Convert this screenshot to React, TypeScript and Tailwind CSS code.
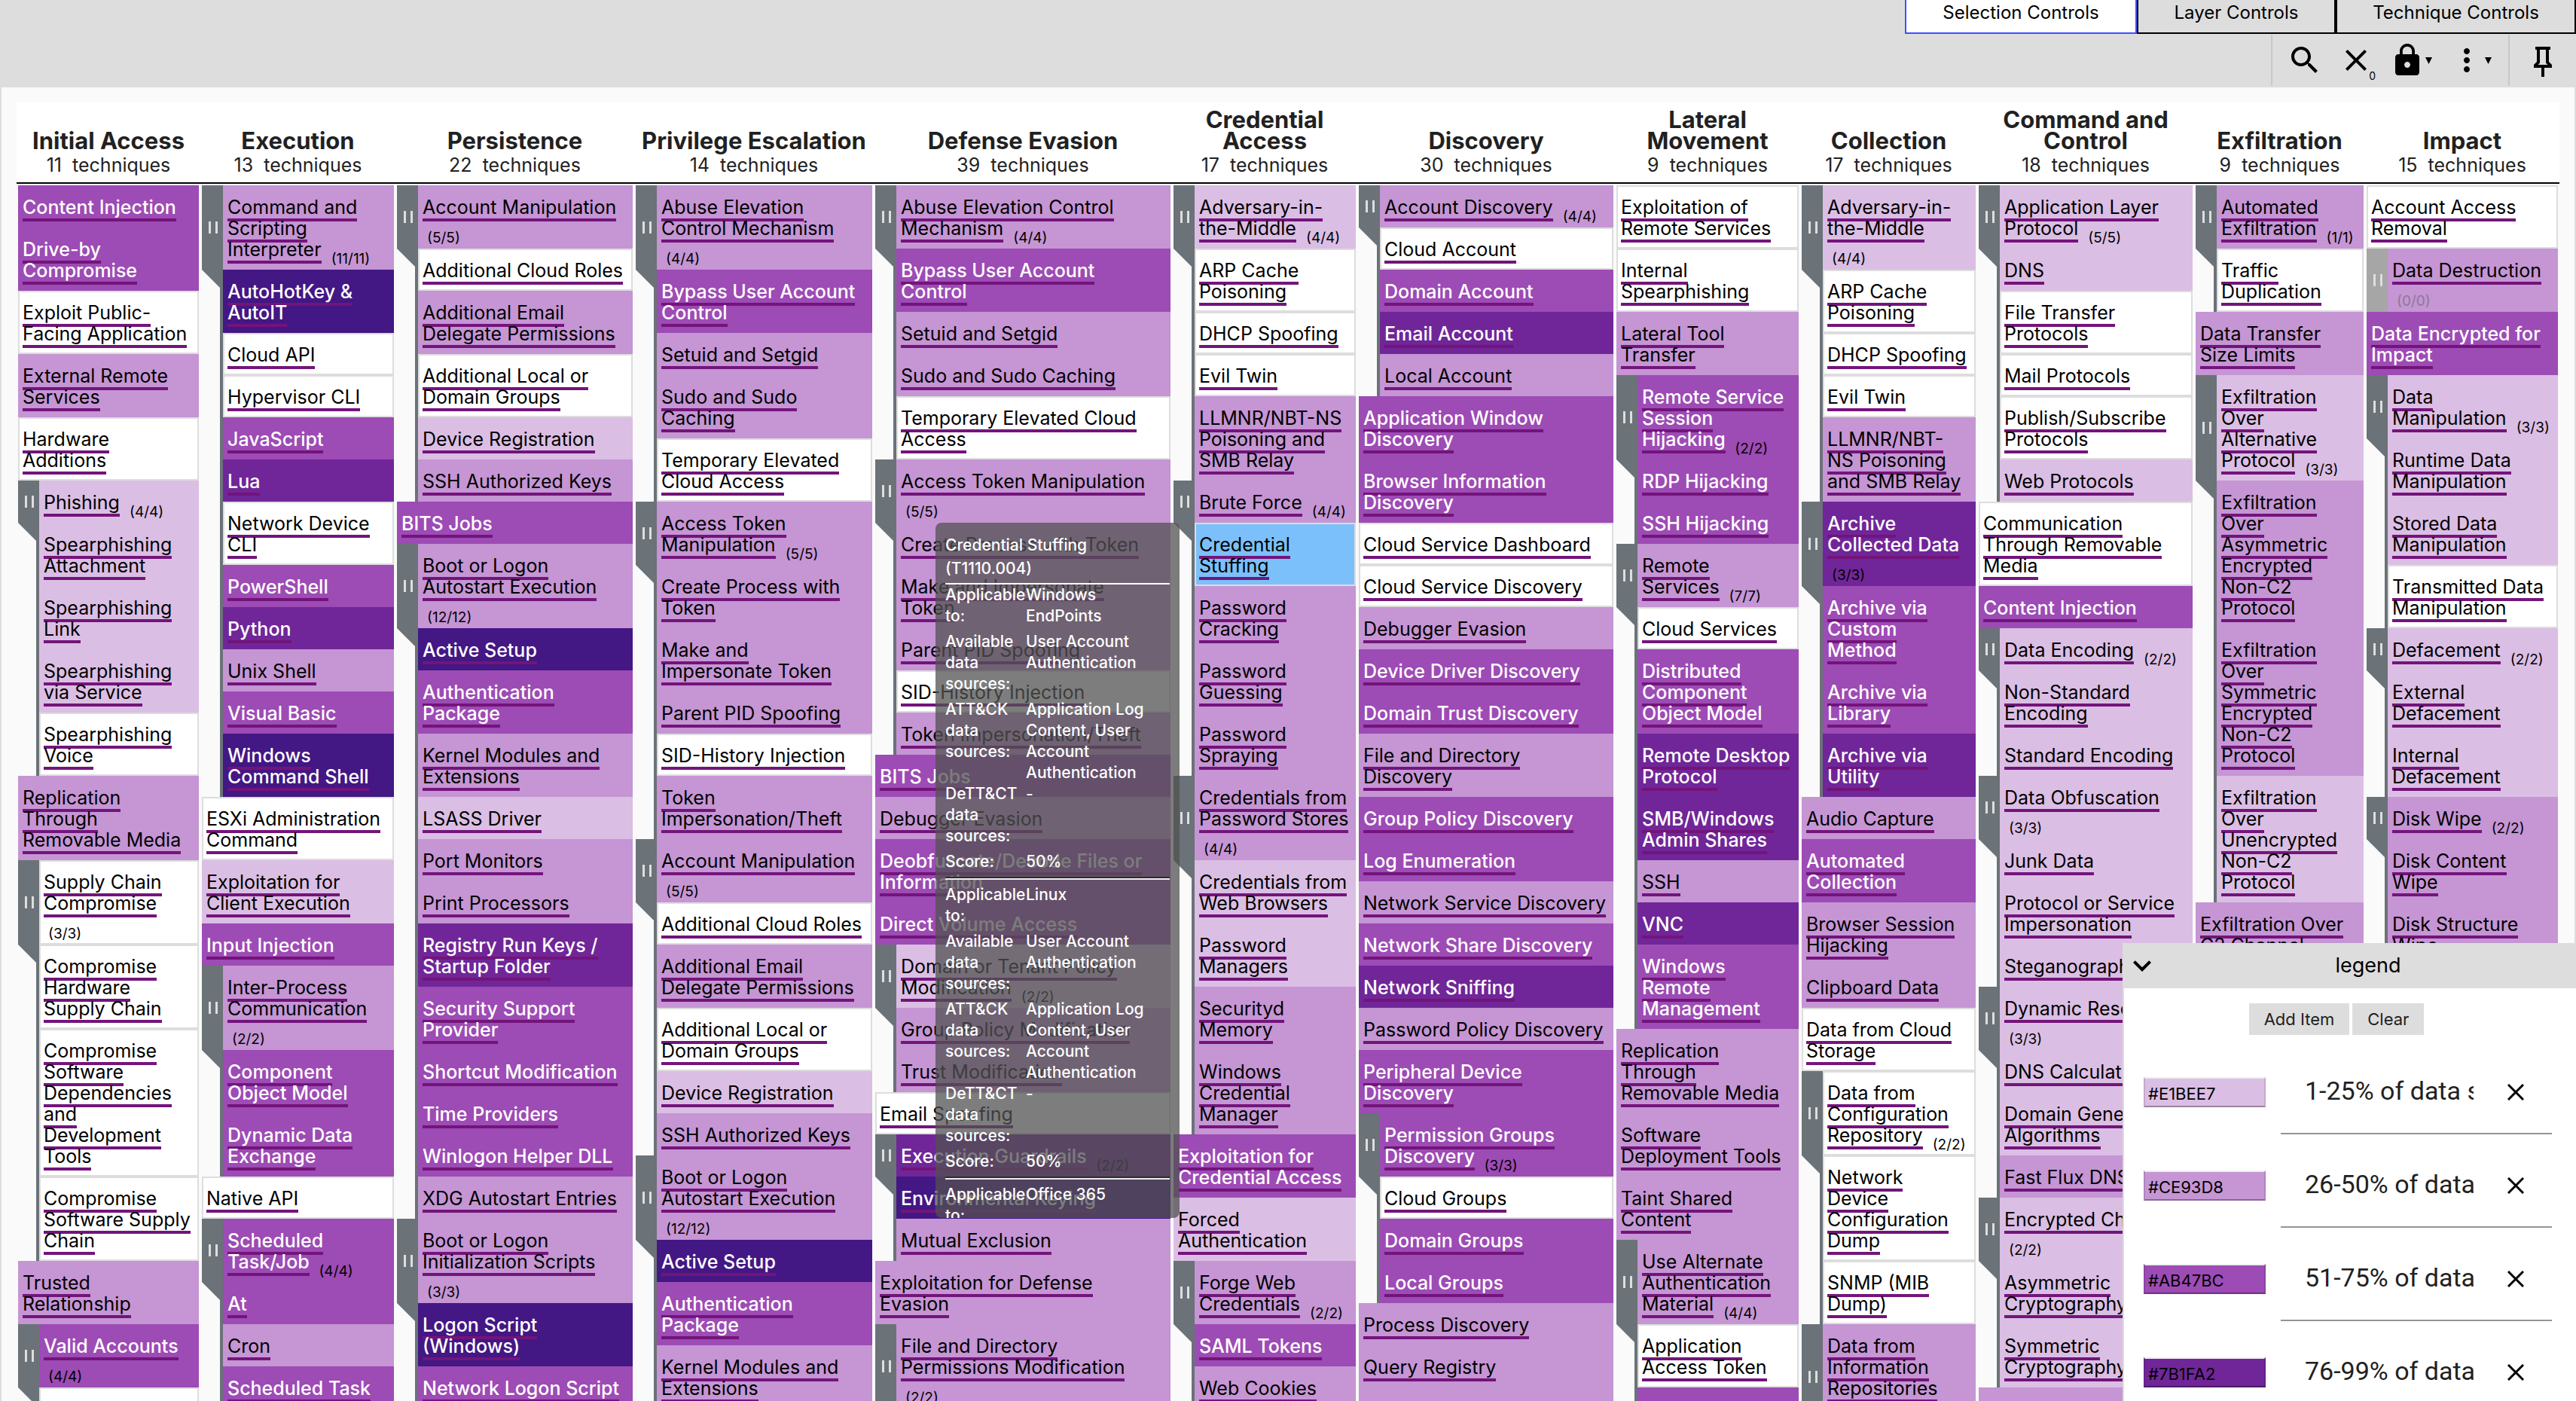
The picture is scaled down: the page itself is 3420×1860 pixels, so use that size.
import React from "react";

type Tone = "w" | "a" | "b" | "c" | "d" | "e" | "h";

interface Technique {
  name: string;
  tone: Tone;
  count?: string;
  /** The count sits on a line of its own below the name. */
  below?: boolean;
  subs?: Technique[];
}

interface Tactic {
  name: string;
  total: number;
  techniques: Technique[];
}

const TONES: Record<Tone, string> = {
  w: "border-2 border-[#dddddd] bg-white pl-1 pt-[13px] pb-[11px] text-black",
  h: "border-2 border-[#dddddd] bg-[#7bc0fa] pl-1 pt-[13px] pb-[11px] text-black",
  a: "bg-[#dbbee4] pl-1.5 pt-[15px] pb-[13px] text-black",
  b: "bg-[#c595d4] pl-1.5 pt-[15px] pb-[13px] text-black",
  c: "bg-[#9d4bb5] pl-1.5 pt-[15px] pb-[13px] font-medium text-white",
  d: "bg-[#702698] pl-1.5 pt-[15px] pb-[13px] font-medium text-white",
  e: "bg-[#431784] pl-1.5 pt-[15px] pb-[13px] font-medium text-white",
};

const t = (tone: Tone, name: string): Technique => ({ name, tone });
const p = (tone: Tone, name: string, count: string, subs: Technique[]): Technique => ({ name, tone, count, subs });
const q = (tone: Tone, name: string, count: string, subs: Technique[]): Technique => ({
  name,
  tone,
  count,
  subs,
  below: true,
});

const TACTICS: Tactic[] = [
  {
    name: "Initial Access",
    total: 11,
    techniques: [
      t("c", "Content Injection"),
      t("c", "Drive-by\nCompromise"),
      t("w", "Exploit Public-\nFacing Application"),
      t("b", "External Remote\nServices"),
      t("w", "Hardware\nAdditions"),
      p("a", "Phishing", "4/4", [
        t("a", "Spearphishing\nAttachment"),
        t("a", "Spearphishing\nLink"),
        t("a", "Spearphishing\nvia Service"),
        t("w", "Spearphishing\nVoice"),
      ]),
      t("b", "Replication\nThrough\nRemovable Media"),
      q("w", "Supply Chain\nCompromise", "3/3", [
        t("w", "Compromise\nHardware\nSupply Chain"),
        t("w", "Compromise\nSoftware\nDependencies\nand\nDevelopment\nTools"),
        t("w", "Compromise\nSoftware Supply\nChain"),
      ]),
      t("b", "Trusted\nRelationship"),
      q("c", "Valid Accounts", "4/4", [t("w", "Cloud Accounts")]),
    ],
  },
  {
    name: "Execution",
    total: 13,
    techniques: [
      p("b", "Command and\nScripting\nInterpreter", "11/11", [
        t("e", "AutoHotKey &\nAutoIT"),
        t("w", "Cloud API"),
        t("w", "Hypervisor CLI"),
        t("c", "JavaScript"),
        t("d", "Lua"),
        t("w", "Network Device\nCLI"),
        t("c", "PowerShell"),
        t("d", "Python"),
        t("b", "Unix Shell"),
        t("c", "Visual Basic"),
        t("e", "Windows\nCommand Shell"),
      ]),
      t("w", "ESXi Administration\nCommand"),
      t("a", "Exploitation for\nClient Execution"),
      t("c", "Input Injection"),
      q("b", "Inter-Process\nCommunication", "2/2", [
        t("c", "Component\nObject Model"),
        t("c", "Dynamic Data\nExchange"),
      ]),
      t("w", "Native API"),
      p("c", "Scheduled\nTask/Job", "4/4", [t("c", "At"), t("b", "Cron"), t("c", "Scheduled Task")]),
    ],
  },
  {
    name: "Persistence",
    total: 22,
    techniques: [
      q("b", "Account Manipulation", "5/5", [
        t("w", "Additional Cloud Roles"),
        t("b", "Additional Email\nDelegate Permissions"),
        t("w", "Additional Local or\nDomain Groups"),
        t("a", "Device Registration"),
        t("b", "SSH Authorized Keys"),
      ]),
      t("c", "BITS Jobs"),
      q("b", "Boot or Logon\nAutostart Execution", "12/12", [
        t("e", "Active Setup"),
        t("c", "Authentication\nPackage"),
        t("b", "Kernel Modules and\nExtensions"),
        t("a", "LSASS Driver"),
        t("b", "Port Monitors"),
        t("b", "Print Processors"),
        t("d", "Registry Run Keys /\nStartup Folder"),
        t("c", "Security Support\nProvider"),
        t("c", "Shortcut Modification"),
        t("c", "Time Providers"),
        t("c", "Winlogon Helper DLL"),
        t("b", "XDG Autostart Entries"),
      ]),
      q("b", "Boot or Logon\nInitialization Scripts", "3/3", [
        t("e", "Logon Script\n(Windows)"),
        t("c", "Network Logon Script"),
      ]),
    ],
  },
  {
    name: "Privilege Escalation",
    total: 14,
    techniques: [
      q("b", "Abuse Elevation\nControl Mechanism", "4/4", [
        t("c", "Bypass User Account\nControl"),
        t("b", "Setuid and Setgid"),
        t("b", "Sudo and Sudo\nCaching"),
        t("w", "Temporary Elevated\nCloud Access"),
      ]),
      p("b", "Access Token\nManipulation", "5/5", [
        t("b", "Create Process with\nToken"),
        t("b", "Make and\nImpersonate Token"),
        t("b", "Parent PID Spoofing"),
        t("w", "SID-History Injection"),
        t("b", "Token\nImpersonation/Theft"),
      ]),
      q("b", "Account Manipulation", "5/5", [
        t("w", "Additional Cloud Roles"),
        t("b", "Additional Email\nDelegate Permissions"),
        t("w", "Additional Local or\nDomain Groups"),
        t("a", "Device Registration"),
        t("b", "SSH Authorized Keys"),
      ]),
      q("b", "Boot or Logon\nAutostart Execution", "12/12", [
        t("e", "Active Setup"),
        t("c", "Authentication\nPackage"),
        t("b", "Kernel Modules and\nExtensions"),
      ]),
    ],
  },
  {
    name: "Defense Evasion",
    total: 39,
    techniques: [
      p("b", "Abuse Elevation Control\nMechanism", "4/4", [
        t("c", "Bypass User Account\nControl"),
        t("b", "Setuid and Setgid"),
        t("b", "Sudo and Sudo Caching"),
        t("w", "Temporary Elevated Cloud\nAccess"),
      ]),
      q("b", "Access Token Manipulation", "5/5", [
        t("b", "Create Process with Token"),
        t("b", "Make and Impersonate\nToken"),
        t("b", "Parent PID Spoofing"),
        t("w", "SID-History Injection"),
        t("b", "Token Impersonation/Theft"),
      ]),
      t("c", "BITS Jobs"),
      t("b", "Debugger Evasion"),
      t("c", "Deobfuscate/Decode Files or\nInformation"),
      t("c", "Direct Volume Access"),
      p("a", "Domain or Tenant Policy\nModification", "2/2", [
        t("b", "Group Policy Modification"),
        t("b", "Trust Modification"),
      ]),
      t("w", "Email Spoofing"),
      p("d", "Execution Guardrails", "2/2", [t("e", "Environmental Keying"), t("b", "Mutual Exclusion")]),
      t("b", "Exploitation for Defense\nEvasion"),
      q("b", "File and Directory\nPermissions Modification", "2/2", []),
    ],
  },
  {
    name: "Credential\nAccess",
    total: 17,
    techniques: [
      p("a", "Adversary-in-\nthe-Middle", "4/4", [
        t("w", "ARP Cache\nPoisoning"),
        t("w", "DHCP Spoofing"),
        t("w", "Evil Twin"),
        t("b", "LLMNR/NBT-NS\nPoisoning and\nSMB Relay"),
      ]),
      p("b", "Brute Force", "4/4", [
        t("h", "Credential\nStuffing"),
        t("b", "Password\nCracking"),
        t("b", "Password\nGuessing"),
        t("b", "Password\nSpraying"),
      ]),
      q("b", "Credentials from\nPassword Stores", "4/4", [
        t("a", "Credentials from\nWeb Browsers"),
        t("a", "Password\nManagers"),
        t("b", "Securityd\nMemory"),
        t("b", "Windows\nCredential\nManager"),
      ]),
      t("c", "Exploitation for\nCredential Access"),
      t("a", "Forced\nAuthentication"),
      p("b", "Forge Web\nCredentials", "2/2", [t("c", "SAML Tokens"), t("b", "Web Cookies")]),
    ],
  },
  {
    name: "Discovery",
    total: 30,
    techniques: [
      p("b", "Account Discovery", "4/4", [
        t("w", "Cloud Account"),
        t("c", "Domain Account"),
        t("d", "Email Account"),
        t("b", "Local Account"),
      ]),
      t("c", "Application Window\nDiscovery"),
      t("c", "Browser Information\nDiscovery"),
      t("w", "Cloud Service Dashboard"),
      t("w", "Cloud Service Discovery"),
      t("b", "Debugger Evasion"),
      t("c", "Device Driver Discovery"),
      t("c", "Domain Trust Discovery"),
      t("b", "File and Directory\nDiscovery"),
      t("c", "Group Policy Discovery"),
      t("c", "Log Enumeration"),
      t("b", "Network Service Discovery"),
      t("c", "Network Share Discovery"),
      t("d", "Network Sniffing"),
      t("b", "Password Policy Discovery"),
      t("c", "Peripheral Device\nDiscovery"),
      p("c", "Permission Groups\nDiscovery", "3/3", [
        t("w", "Cloud Groups"),
        t("c", "Domain Groups"),
        t("c", "Local Groups"),
      ]),
      t("b", "Process Discovery"),
      t("b", "Query Registry"),
      t("b", "Remote System Discovery"),
    ],
  },
  {
    name: "Lateral\nMovement",
    total: 9,
    techniques: [
      t("w", "Exploitation of\nRemote Services"),
      t("w", "Internal\nSpearphishing"),
      t("b", "Lateral Tool\nTransfer"),
      p("c", "Remote Service\nSession\nHijacking", "2/2", [t("c", "RDP Hijacking"), t("c", "SSH Hijacking")]),
      p("b", "Remote\nServices", "7/7", [
        t("w", "Cloud Services"),
        t("c", "Distributed\nComponent\nObject Model"),
        t("d", "Remote Desktop\nProtocol"),
        t("d", "SMB/Windows\nAdmin Shares"),
        t("b", "SSH"),
        t("d", "VNC"),
        t("c", "Windows\nRemote\nManagement"),
      ]),
      t("b", "Replication\nThrough\nRemovable Media"),
      t("b", "Software\nDeployment Tools"),
      t("b", "Taint Shared\nContent"),
      p("b", "Use Alternate\nAuthentication\nMaterial", "4/4", [
        t("w", "Application\nAccess Token"),
        t("c", "Pass the Hash"),
      ]),
    ],
  },
  {
    name: "Collection",
    total: 17,
    techniques: [
      q("a", "Adversary-in-\nthe-Middle", "4/4", [
        t("w", "ARP Cache\nPoisoning"),
        t("w", "DHCP Spoofing"),
        t("w", "Evil Twin"),
        t("b", "LLMNR/NBT-\nNS Poisoning\nand SMB Relay"),
      ]),
      q("d", "Archive\nCollected Data", "3/3", [
        t("c", "Archive via\nCustom\nMethod"),
        t("c", "Archive via\nLibrary"),
        t("d", "Archive via\nUtility"),
      ]),
      t("b", "Audio Capture"),
      t("c", "Automated\nCollection"),
      t("b", "Browser Session\nHijacking"),
      t("b", "Clipboard Data"),
      t("w", "Data from Cloud\nStorage"),
      p("w", "Data from\nConfiguration\nRepository", "2/2", [
        t("w", "Network\nDevice\nConfiguration\nDump"),
        t("w", "SNMP (MIB\nDump)"),
      ]),
      q("b", "Data from\nInformation\nRepositories", "5/5", []),
    ],
  },
  {
    name: "Command and\nControl",
    total: 18,
    techniques: [
      p("a", "Application Layer\nProtocol", "5/5", [
        t("a", "DNS"),
        t("w", "File Transfer\nProtocols"),
        t("w", "Mail Protocols"),
        t("w", "Publish/Subscribe\nProtocols"),
        t("a", "Web Protocols"),
      ]),
      t("w", "Communication\nThrough Removable\nMedia"),
      t("c", "Content Injection"),
      p("a", "Data Encoding", "2/2", [t("a", "Non-Standard\nEncoding"), t("a", "Standard Encoding")]),
      q("a", "Data Obfuscation", "3/3", [
        t("a", "Junk Data"),
        t("a", "Protocol or Service\nImpersonation"),
        t("a", "Steganography"),
      ]),
      q("a", "Dynamic Resolution", "3/3", [
        t("a", "DNS Calculation"),
        t("a", "Domain Generation\nAlgorithms"),
        t("b", "Fast Flux DNS"),
      ]),
      q("a", "Encrypted Channel", "2/2", [
        t("a", "Asymmetric\nCryptography"),
        t("a", "Symmetric\nCryptography"),
      ]),
      t("b", "Fallback Channels"),
    ],
  },
  {
    name: "Exfiltration",
    total: 9,
    techniques: [
      p("b", "Automated\nExfiltration", "1/1", [t("w", "Traffic\nDuplication")]),
      t("b", "Data Transfer\nSize Limits"),
      p("a", "Exfiltration\nOver\nAlternative\nProtocol", "3/3", [
        t("b", "Exfiltration\nOver\nAsymmetric\nEncrypted\nNon-C2\nProtocol"),
        t("b", "Exfiltration\nOver\nSymmetric\nEncrypted\nNon-C2\nProtocol"),
        t("a", "Exfiltration\nOver\nUnencrypted\nNon-C2\nProtocol"),
      ]),
      t("b", "Exfiltration Over\nC2 Channel"),
    ],
  },
  {
    name: "Impact",
    total: 15,
    techniques: [
      t("w", "Account Access\nRemoval"),
      q("b", "Data Destruction", "0/0", []),
      t("c", "Data Encrypted for\nImpact"),
      p("a", "Data\nManipulation", "3/3", [
        t("a", "Runtime Data\nManipulation"),
        t("a", "Stored Data\nManipulation"),
        t("w", "Transmitted Data\nManipulation"),
      ]),
      p("a", "Defacement", "2/2", [t("a", "External\nDefacement"), t("a", "Internal\nDefacement")]),
      p("b", "Disk Wipe", "2/2", [t("b", "Disk Content\nWipe"), t("b", "Disk Structure\nWipe")]),
    ],
  },
];

const COLUMNS =
  "grid grid-cols-[minmax(0,240fr)_minmax(0,255fr)_minmax(0,313fr)_minmax(0,314fr)_minmax(0,392fr)_minmax(0,242fr)_minmax(0,338fr)_minmax(0,242fr)_minmax(0,231fr)_minmax(0,284fr)_minmax(0,223fr)_minmax(0,254fr)] gap-x-1 px-0.5";

function Cell({ item }: { item: Technique }) {
  const empty = item.count === "0/0";
  return (
    <div
      className={`overflow-hidden whitespace-pre text-[25px] leading-7 [font-optical-sizing:none] ${TONES[item.tone]}`}
    >
      <span className="border-b-4 border-[#73147b]">{item.name}</span>
      {item.count && (
        <>
          {item.below ? "\n" : " "}
          <sub
            className={`static ml-1.5 align-[-10px] text-[19px] font-normal leading-[0px] ${empty ? "text-[#8c7a94]" : "text-black"}`}
          >
            ({item.count})
          </sub>
        </>
      )}
    </div>
  );
}

function Group({ item }: { item: Technique }) {
  const empty = item.count === "0/0";
  return (
    <div className="grid grid-cols-[28px_minmax(0,1fr)]">
      <button
        type="button"
        aria-label={`Toggle sub-techniques of ${item.name.replace(/\n/g, " ")}`}
        className={`flex items-center justify-center pl-0.5 ${empty ? "bg-[#a6a6a6]" : "bg-[#6b7278]"}`}
      >
        <svg width="12" height="16" viewBox="0 0 12 16" fill="#dedede">
          <path d="M0 0h3v16H0zM9 0h3v16H9z" />
        </svg>
      </button>
      <Cell item={item} />
      {item.subs && item.subs.length > 0 && (
        <>
          <div className="flex">
            <svg className="h-6 w-6" viewBox="0 0 24 24" fill="#6b7278">
              <path d="M0 0h24v24z" />
            </svg>
            <div className="w-1 bg-[#6b7278]" />
          </div>
          <div>
            {item.subs.map((s, i) => (
              <Cell key={i} item={s} />
            ))}
          </div>
        </>
      )}
    </div>
  );
}

function Matrix() {
  return (
    <div className="min-w-0">
      <header className={`${COLUMNS} h-[108px] items-end border-b-2 border-black bg-white pb-[9px] text-[#212121]`}>
        {TACTICS.map((c) => (
          <div key={c.name} className="whitespace-pre text-center">
            <h2 className="text-[31px] font-bold leading-7">{c.name}</h2>
            <p className="mt-1 text-[25px] leading-7 [font-optical-sizing:none]">{`${c.total}  techniques`}</p>
          </div>
        ))}
      </header>
      <div className={`${COLUMNS} items-start pt-0.5`}>
        {TACTICS.map((c) => (
          <div key={c.name}>
            {c.techniques.map((item, i) => (item.count ? <Group key={i} item={item} /> : <Cell key={i} item={item} />))}
          </div>
        ))}
      </div>
    </div>
  );
}

function Icon({ d }: { d: string }) {
  return (
    <svg className="h-12 w-12" viewBox="0 0 24 24" fill="currentColor" aria-hidden="true">
      <path d={d} />
    </svg>
  );
}

function Caret() {
  return (
    <svg className="h-[9px] w-[9px]" viewBox="0 0 9 9" fill="currentColor" aria-hidden="true">
      <path d="M0 0h9L4.500 9z" />
    </svg>
  );
}

function TopBar() {
  return (
    <div className="flex h-[116px] flex-col items-end bg-[#dddddd]">
      <nav className="flex h-[45px] text-[24px] leading-7">
        <button type="button" className="w-[308px] border-2 border-t-0 border-[#3f51ff] bg-white pb-2.5">
          Selection Controls
        </button>
        <button type="button" className="w-[264px] border-2 border-t-0 border-black pb-2.5">
          Layer Controls
        </button>
        <button type="button" className="w-[319px] border-2 border-t-0 border-black pb-2.5">
          Technique Controls
        </button>
      </nav>
      <div className="mt-px flex h-[68px]">
        <div className="flex w-[317px] items-center border-x-2 border-[#c8c8c8] pl-[19px]">
          <button type="button" aria-label="Search and multiselect">
            <Icon d="M15.5 14h-.79l-.28-.27C15.410 12.590 16 11.110 16 9.500 16 5.910 13.090 3 9.500 3S3 5.910 3 9.500 5.910 16 9.500 16c1.610 0 3.090-.59 4.230-1.570l.27.28v.79l5 4.990L20.490 19l-4.990-5zm-6 0C7.010 14 5 11.990 5 9.500S7.010 5 9.500 5 14 7.010 14 9.500 11.990 14 9.500 14z" />
          </button>
          <button type="button" aria-label="Deselect techniques" className="relative ml-5">
            <Icon d="M19 6.410L17.590 5 12 10.590 6.410 5 5 6.410 10.590 12 5 17.590 6.410 19 12 13.410 17.590 19 19 17.590 13.410 12z" />
            <span className="absolute -bottom-1 -right-0.5 text-[14px] leading-none">0</span>
          </button>
          <button type="button" aria-label="Selection behavior" className="ml-5 flex items-center">
            <Icon d="M18 8h-1V6c0-2.760-2.240-5-5-5S7 3.240 7 6v2H6c-1.100 0-2 .9-2 2v10c0 1.100.9 2 2 2h12c1.100 0 2-.9 2-2V10c0-1.100-.9-2-2-2zm-6 9c-1.100 0-2-.9-2-2s.9-2 2-2 2 .9 2 2-.9 2-2 2zm3.100-9H8.900V6c0-1.710 1.390-3.100 3.100-3.100 1.710 0 3.100 1.390 3.100 3.100v2z" />
            <Caret />
          </button>
          <button type="button" aria-label="More options" className="ml-[22px] flex items-center">
            <Icon d="M12 8c1.100 0 2-.9 2-2s-.9-2-2-2-2 .9-2 2 .9 2 2 2zm0 2c-1.100 0-2 .9-2 2s.9 2 2 2 2-.9 2-2-.9-2-2-2zm0 6c-1.100 0-2 .9-2 2s.9 2 2 2 2-.9 2-2-.9-2-2-2z" />
            <Caret />
          </button>
        </div>
        <div className="flex w-[88px] items-center pl-5 pt-1">
          <button type="button" aria-label="Pin toolbar">
            <Icon d="M16 12V4h1V2H7v2h1v8l-2 2v2h5v6h2v-6h5v-2l-2-2zM8.800 14L10 12.800V4h4v8.800L15.200 14H8.800z" />
          </button>
        </div>
      </div>
    </div>
  );
}

function PlatformBlock({ platform }: { platform: string }) {
  const rows: [string, string][] = [
    ["Applicable\nto:", platform],
    ["Available\ndata\nsources:", "User Account\nAuthentication"],
    ["ATT&CK\ndata\nsources:", "Application Log\nContent, User\nAccount\nAuthentication"],
    ["DeTT&CT\ndata\nsources:", "-"],
    ["Score:", "50%"],
  ];
  return (
    <table className="w-full table-fixed whitespace-pre text-left">
      <tbody>
        {rows.map(([label, value]) => (
          <tr key={label} className="align-top">
            <th className="w-[107px] pb-1.5 font-medium">{label}</th>
            <td>{value}</td>
          </tr>
        ))}
      </tbody>
    </table>
  );
}

function Tooltip() {
  return (
    <div
      role="tooltip"
      className="absolute left-[1242px] top-[694px] max-h-[923px] w-[324px] overflow-hidden rounded-lg bg-[#515151]/75 px-[13px] pt-[14px] pb-3 text-[21px] font-medium leading-7 text-white"
    >
      <p className="leading-[31px]">
        Credential Stuffing
        <br />
        (T1110.004)
      </p>
      <hr className="mt-1 border-t-2 border-white" />
      <PlatformBlock platform={"Windows\nEndPoints"} />
      <hr className="mb-1.5 border-t-2 border-b-2 border-t-[#2c2c2c] border-b-[#eeeeee]" />
      <PlatformBlock platform="Linux" />
      <hr className="mb-1.5 border-t-2 border-b-2 border-t-[#2c2c2c] border-b-[#eeeeee]" />
      <PlatformBlock platform="Office 365" />
    </div>
  );
}

const LEGEND = [
  { color: "#E1BEE7", label: "1-25% of data sources available", swatch: "bg-[#dbbee4]" },
  { color: "#CE93D8", label: "26-50% of data sources available", swatch: "bg-[#c595d4]" },
  { color: "#AB47BC", label: "51-75% of data sources available", swatch: "bg-[#9d4bb5]" },
  { color: "#7B1FA2", label: "76-99% of data sources available", swatch: "bg-[#702698]" },
];

function Legend() {
  return (
    <aside className="absolute bottom-0 right-0 h-[608px] w-[602px] overflow-hidden border-l-2 border-[#dddddd] bg-white">
      <div className="flex h-[60px] items-center bg-[#dddddd]">
        <button type="button" aria-label="Collapse legend">
          <Icon d="M16.590 8.590L12 13.170 7.410 8.590 6 10l6 6 6-6z" />
        </button>
        <h3 className="flex-1 text-center text-[27px] leading-8">legend</h3>
      </div>
      <div className="mt-5 flex justify-center gap-1 pr-9 text-[22px] leading-7 text-[#212121]">
        <button type="button" className="h-[42px] bg-[#dddddd] px-5">
          Add Item
        </button>
        <button type="button" className="h-[42px] bg-[#dddddd] px-5">
          Clear
        </button>
      </div>
      <ul className="mt-2">
        {LEGEND.map((l) => (
          <li key={l.color} className="flex h-[124px] items-stretch pl-[26px] pr-8">
            <input
              aria-label={`Color of ${l.label}`}
              defaultValue={l.color}
              className={`mt-12 h-10 w-[162px] border-2 border-t-[#eeeeee] border-b-black/30 border-x-black/10 bg-clip-border pl-1 pt-1 text-[22px] leading-7 text-black ${l.swatch}`}
            />
            <div className="ml-5 flex flex-1 items-start border-b-2 border-[#949494] pl-8">
              <input
                aria-label={`Label of ${l.color}`}
                defaultValue={l.label}
                className="mt-[46px] h-10 w-56 bg-transparent font-['Roboto',sans-serif] text-[34px] leading-10 text-[#212121]"
              />
              <button type="button" aria-label={`Remove ${l.label}`} className="ml-[45px] mt-[57px]">
                <svg className="h-[22px] w-[22px]" viewBox="0 0 22 22" fill="none" stroke="black" strokeWidth="3">
                  <path d="M1 1l20 20M21 1L1 21" />
                </svg>
              </button>
            </div>
          </li>
        ))}
      </ul>
    </aside>
  );
}

export default function App() {
  return (
    <div className="relative flex h-screen flex-col overflow-hidden bg-[#fafafa] font-['Inter','Noto_Sans',sans-serif] text-black">
      <TopBar />
      <main className="min-h-0 flex-1 overflow-hidden border-x-2 border-[#dddddd] px-5 pt-5">
        <Matrix />
      </main>
      <Tooltip />
      <Legend />
    </div>
  );
}
